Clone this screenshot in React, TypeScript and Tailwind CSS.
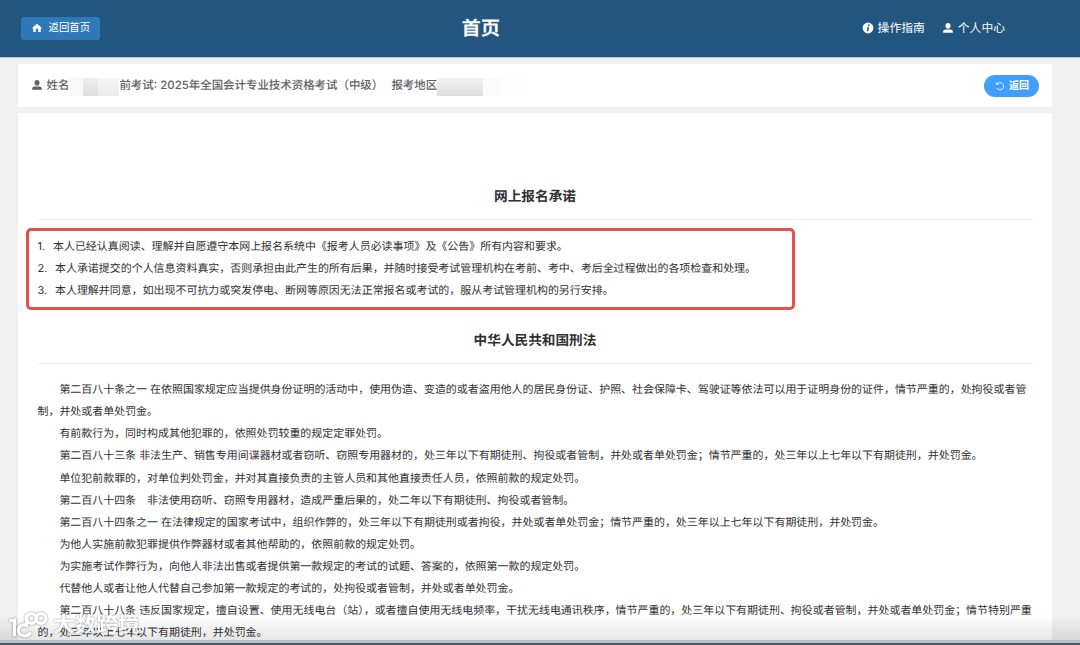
import React from 'react';

interface LawLine {
  text: string;
  indent?: boolean;
}

const promises = [
  { no: '1.', gap: 'w-[15.5px]', text: '本人已经认真阅读、理解并自愿遵守本网上报名系统中《报考人员必读事项》及《公告》所有内容和要求。' },
  { no: '2.', gap: 'w-[17.5px]', text: '本人承诺提交的个人信息资料真实，否则承担由此产生的所有后果，并随时接受考试管理机构在考前、考中、考后全过程做出的各项检查和处理。' },
  { no: '3.', gap: 'w-[17.5px]', text: '本人理解并同意，如出现不可抗力或突发停电、断网等原因无法正常报名或考试的，服从考试管理机构的另行安排。' },
];

const lawLines: LawLine[] = [
  { text: '第二百八十条之一 在依照国家规定应当提供身份证明的活动中，使用伪造、变造的或者盗用他人的居民身份证、护照、社会保障卡、驾驶证等依法可以用于证明身份的证件，情节严重的，处拘役或者管', indent: true },
  { text: '制，并处或者单处罚金。' },
  { text: '有前款行为，同时构成其他犯罪的，依照处罚较重的规定定罪处罚。', indent: true },
  { text: '第二百八十三条 非法生产、销售专用间谍器材或者窃听、窃照专用器材的，处三年以下有期徒刑、拘役或者管制，并处或者单处罚金；情节严重的，处三年以上七年以下有期徒刑，并处罚金。', indent: true },
  { text: '单位犯前款罪的，对单位判处罚金，并对其直接负责的主管人员和其他直接责任人员，依照前款的规定处罚。', indent: true },
  { text: '第二百八十四条　非法使用窃听、窃照专用器材，造成严重后果的，处二年以下有期徒刑、拘役或者管制。', indent: true },
  { text: '第二百八十四条之一 在法律规定的国家考试中，组织作弊的，处三年以下有期徒刑或者拘役，并处或者单处罚金；情节严重的，处三年以上七年以下有期徒刑，并处罚金。', indent: true },
  { text: '为他人实施前款犯罪提供作弊器材或者其他帮助的，依照前款的规定处罚。', indent: true },
  { text: '为实施考试作弊行为，向他人非法出售或者提供第一款规定的考试的试题、答案的，依照第一款的规定处罚。', indent: true },
  { text: '代替他人或者让他人代替自己参加第一款规定的考试的，处拘役或者管制，并处或者单处罚金。', indent: true },
  { text: '第二百八十八条 违反国家规定，擅自设置、使用无线电台（站），或者擅自使用无线电频率，干扰无线电通讯秩序，情节严重的，处三年以下有期徒刑、拘役或者管制，并处或者单处罚金；情节特别严重', indent: true },
  { text: '的，处三年以上七年以下有期徒刑，并处罚金。' },
];

const UserIcon = ({ className }: { className: string }) => (
  <svg viewBox="0 0 12 12" className={className} fill="currentColor">
    <ellipse cx="6" cy="3.7" rx="2.5" ry="2.8" />
    <path d="M1.2 10.7V9.4C1.2 8.2 2.2 7.4 3.6 7.4H8.4C9.8 7.4 10.8 8.2 10.8 9.4V10.7Z" />
  </svg>
);

const Header = () => (
  <header className="flex h-[57px] shrink-0 items-center bg-[#22567f] text-white">
    <div className="flex w-[461.5px] pl-[21px]">
      <button className="mb-px flex h-[23px] w-[79px] items-center rounded-[3px] bg-[#3079b8] pl-[10.5px] text-[10.4px]">
        <svg viewBox="0 0 10 10" className="mr-[7px] h-[10px] w-[10px]" fill="currentColor">
          <path d="M5 0.8L9.4 4.6V5.4H8.7V9H6.3V6.8A1.3 1.3 0 0 0 3.7 6.8V9H1.3V5.4H0.6V4.6Z" />
        </svg>
        返回首页
      </button>
    </div>
    <h1 className="pb-px text-[19.3px] leading-[28px] font-bold">首页</h1>
    <nav className="flex flex-1 items-center justify-end pr-[75px] text-[11.8px]">
      <svg viewBox="0 0 12 12" className="mr-1 mb-px h-[12px] w-[12px]">
        <circle cx="6" cy="6" r="5.4" fill="white" />
        <path d="M6.7 2.5V3.9M6.4 4.9L5.5 9.1" stroke="#22567f" strokeWidth="1.5" fill="none" />
      </svg>
      <span className="mr-[17px]">操作指南</span>
      <UserIcon className="mr-[4px] mb-px h-[12px] w-[12px]" />
      <span>个人中心</span>
    </nav>
  </header>
);

const InfoBar = () => (
  <div className="flex h-[43px] shrink-0 items-center bg-white pr-[13px] pl-[13px] text-[11.45px] font-medium text-[#606266]">
    <UserIcon className="mr-[3.5px] mb-px h-[12px] w-[12px]" />
    <span>姓名</span>
    {/* masked name */}
    <span className="mt-[2px] flex h-[18px] w-[50px]">
      <span className="w-[14px] bg-[#f8f8f8]" />
      <span className="w-[15px] bg-gradient-to-b from-[#efefef] to-[#dedede]" />
      <span className="w-[21px] bg-gradient-to-b from-[#f6f6f6] to-[#ebebeb]" />
    </span>
    <span className="w-[272px]">前考试: 2025年全国会计专业技术资格考试（中级）</span>
    <span>报考地区</span>
    {/* masked region */}
    <span className="mt-[2px] flex h-[18px]">
      <span className="w-[46px] bg-gradient-to-b from-[#f3f3f3] to-[#dddddd]" />
      <span className="w-[17px] bg-[#fafafa]" />
      <span className="w-[28px] bg-[#fdfdfd]" />
    </span>
    <button className="ml-auto flex h-[22px] w-[55px] items-center rounded-full bg-[#409eff] pl-[11px] text-[10px] font-bold text-white">
      <svg viewBox="0 0 10 10" className="mr-[4px] h-[10px] w-[10px]" fill="none" stroke="currentColor" strokeWidth=".8">
        <path d="M1.6 1.2V3.4H3.8M1.8 3.4A3.6 3.6 0 1 1 1.9 7" />
      </svg>
      返回
    </button>
  </div>
);

const SectionTitle = ({ children }: { children: React.ReactNode }) => (
  <h2 className="border-b border-[#f0f0f0] pt-px pb-[11px] text-center text-[13.65px] leading-[22px] font-bold text-[#303133]">
    {children}
  </h2>
);

const Watermark = () => (
  <div className="absolute top-[609px] left-[8px] flex items-center text-white opacity-90">
    <svg
      viewBox="0 0 42 30"
      className="h-[30px] w-[42px] drop-shadow-[0_0_1px_rgba(0,0,0,0.5)]"
      fill="none"
      stroke="white"
      strokeWidth="3.2"
      strokeLinecap="round"
    >
      <path d="M3 10.5L6.5 10V25" />
      <path d="M18.5 6V15.5C14.5 14 10.500 16 10.5 20.500C10.5 26 18 27.500 22 23.500" />
      <circle cx="23.5" cy="8.5" r="4.8" />
      <circle cx="33" cy="8.5" r="4.8" />
    </svg>
    <span className="ml-[3px] text-[21.7px] leading-[32px] font-bold [text-shadow:0_0_2px_rgba(0,0,0,0.5)]">大数跨境</span>
  </div>
);

const App: React.FC = () => {
  return (
    <div
      className="relative flex h-[645px] w-[1080px] flex-col overflow-hidden bg-[#f1f1f1] whitespace-nowrap [text-rendering:geometricPrecision]"
      style={{ fontFamily: 'Inter, "Noto Sans CJK SC", sans-serif' }}
    >
      <Header />
      <div className="h-px shrink-0 bg-[#b5c6d6]" />

      <div className="flex min-h-0 flex-1 flex-col pt-[6px] pr-[28px] pl-[18px]">
        <InfoBar />

        <main className="mt-[6px] flex-1 bg-white px-[19.5px] pt-[72px] text-[10.96px] leading-[22.1px] text-[#303133]">
          <SectionTitle>网上报名承诺</SectionTitle>
          <div className="-ml-[11.5px] mt-[8px] h-[82px] w-[769px] rounded-[5px] border-[3.5px] border-[#e5504d] pt-[4px] pl-[8.5px]">
            {promises.map((item) => (
              <p key={item.no} className="flex">
                <span className={`${item.gap} shrink-0`}>{item.no}</span>
                <span>{item.text}</span>
              </p>
            ))}
          </div>

          <div className="mt-[19px]">
            <SectionTitle>中华人民共和国刑法</SectionTitle>
          </div>
          <div className="mt-[14.2px]">
            {lawLines.map((line) => (
              <p key={line.text} className={line.indent ? 'pl-[21.9px]' : ''}>
                {line.text}
              </p>
            ))}
          </div>
        </main>
      </div>

      {/* Bottom edge */}
      <div className="absolute bottom-[5px] left-0 h-[25px] w-full bg-gradient-to-b from-transparent to-black/10" />
      <div className="absolute bottom-0 left-0 h-[5px] w-full border-b-2 border-[#4e5960] bg-[#b9c1cd]" />
      <Watermark />
    </div>
  );
};

export default App;
